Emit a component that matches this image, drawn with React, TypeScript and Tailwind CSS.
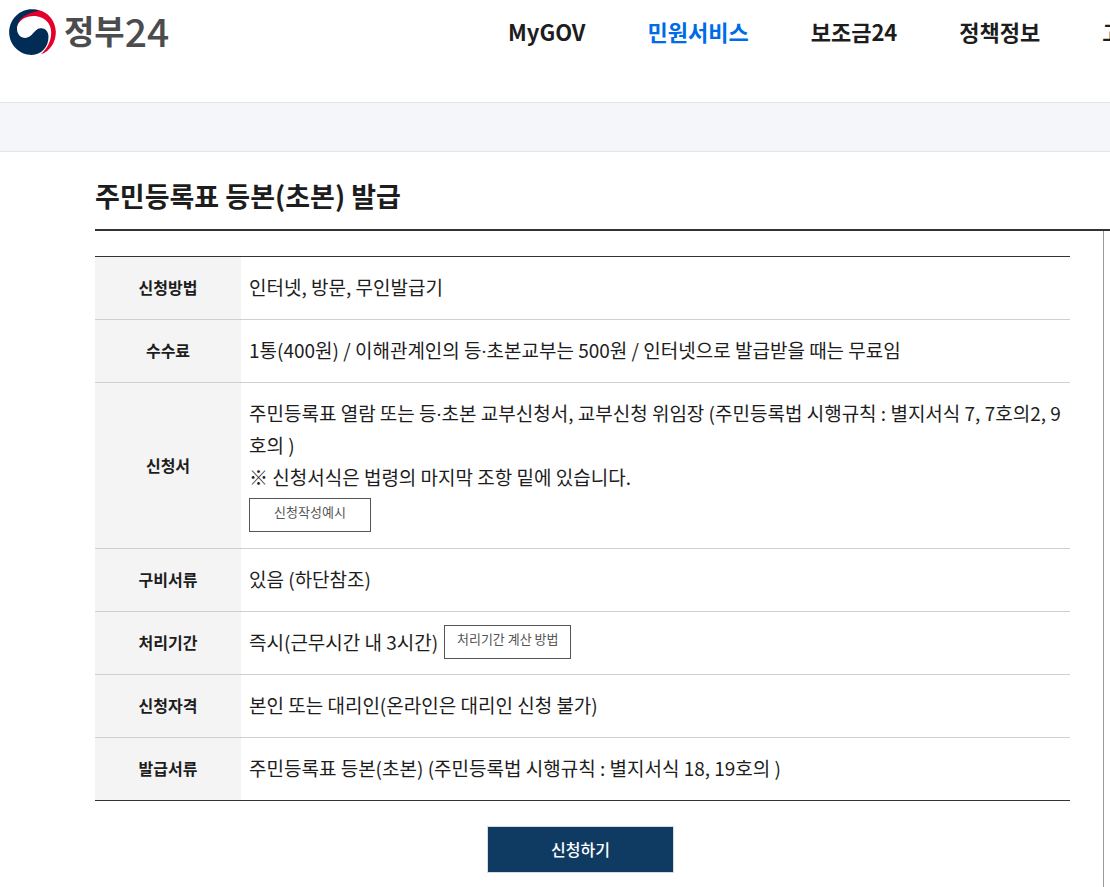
import type { ReactNode } from "react";

const navItems = [
  { label: "MyGOV", active: false },
  { label: "민원서비스", active: true },
  { label: "보조금24", active: false },
  { label: "정책정보", active: false },
  { label: "고객센터", active: false },
];

function GovSymbol() {
  return (
    <svg viewBox="27 28 140 138" className="h-[46px] w-[47px] shrink-0" aria-hidden="true">
      <path
        fill="#e4002b"
        d="M50 80 C60 57 82 47 106 49 C134 52 153 72 153 98 C153 124 142 146 122 164 C150 154 167 128 167 96 C166 60 138 30 104 30 C76 30 52 48 50 80Z"
      />
      <path
        fill="#002c55"
        d="M118 33 C74 16 27 50 27 98 C27 136 58 166 95 166 C122 164 145 144 145 111 C145 94 133 84 120 86 C102 88 98 113 76 115 C58 115 48 98 51 80 C56 54 82 38 118 33Z"
      />
    </svg>
  );
}

function MiddleDot() {
  return <span className="font-['Open_Sans',sans-serif] leading-none">·</span>;
}

function SmallButton({ children, className }: { children: ReactNode; className: string }) {
  return (
    <button
      type="button"
      className={`h-[34px] border border-[#555] bg-white pb-[6px] text-[13px] leading-5 text-[#555] ${className}`}
    >
      {children}
    </button>
  );
}

const rows: { title: string; body: ReactNode }[] = [
  { title: "신청방법", body: "인터넷, 방문, 무인발급기" },
  {
    title: "수수료",
    body: (
      <>
        1통(400원) / 이해관계인의 등
        <MiddleDot />
        초본교부는 500원 / 인터넷으로 발급받을 때는 무료임
      </>
    ),
  },
  {
    title: "신청서",
    body: (
      <>
        <p>
          주민등록표 열람 또는 등
          <MiddleDot />
          초본 교부신청서, 교부신청 위임장 (주민등록법 시행규칙 : 별지서식 7, 7호의2, 9호의 )
        </p>
        <p>※ 신청서식은 법령의 마지막 조항 밑에 있습니다.</p>
        <SmallButton className="mt-[5px] block w-[122px]">신청작성예시</SmallButton>
      </>
    ),
  },
  { title: "구비서류", body: "있음 (하단참조)" },
  {
    title: "처리기간",
    body: (
      <div className="-my-px flex items-center gap-[6px]">
        <span>즉시(근무시간 내 3시간)</span>
        <SmallButton className="w-[127px]">처리기간 계산 방법</SmallButton>
      </div>
    ),
  },
  { title: "신청자격", body: "본인 또는 대리인(온라인은 대리인 신청 불가)" },
  { title: "발급서류", body: "주민등록표 등본(초본) (주민등록법 시행규칙 : 별지서식 18, 19호의 )" },
];

export default function App() {
  return (
    <div className="flex min-h-screen flex-col overflow-hidden bg-white font-['Noto_Sans_CJK_KR',sans-serif] text-[#1d1d1d]">
      <header className="flex h-[102px] items-start whitespace-nowrap pl-[9px]">
        <a href="#" className="flex h-16 w-[499px] shrink-0 items-center gap-2 text-[#4b4c4e]">
          <GovSymbol />
          <span className="flex items-center pb-1 leading-none">
            <span className="text-[33px] font-bold">정부</span>
            <span className="text-[39px] font-medium">24</span>
          </span>
        </a>
        <nav className="flex h-[62px] shrink-0 items-center gap-[62px] text-[22px] font-bold">
          {navItems.map((item) => (
            <a key={item.label} href="#" className={item.active ? "text-[#006be6]" : ""}>
              {item.label}
            </a>
          ))}
        </nav>
      </header>
      <div className="h-[50px] border-y border-[#e3e5e9] bg-[#f5f6fa]" />
      <main className="flex flex-1 flex-col pl-[95px]">
        <h1 className="border-b-2 border-[#333] pb-[13px] pt-6 text-[27px] font-bold leading-10">
          주민등록표 등본(초본) 발급
        </h1>
        <div className="mr-[6px] flex-1 border-r border-[#999] pr-[33px] pt-[25px]">
          <table className="w-full table-fixed border-collapse border-y border-[#333] text-[19px] leading-8">
            <colgroup>
              <col className="w-[146px]" />
              <col />
            </colgroup>
            <tbody>
              {rows.map((row) => (
                <tr key={row.title} className="border-t border-[#d0d0d0] first:border-[#333]">
                  <th scope="row" className="bg-[#f4f4f4] pb-[2px] text-center text-[16px] font-bold">
                    {row.title}
                  </th>
                  <td className="break-all pb-4 pl-2 pt-[14px]">{row.body}</td>
                </tr>
              ))}
            </tbody>
          </table>
          <div className="flex justify-center py-[25px] pr-1">
            <button
              type="button"
              className="h-[47px] w-[187px] border border-[#d5dbe2] bg-[#0f3b63] pb-[2px] text-[16px] font-medium text-white"
            >
              신청하기
            </button>
          </div>
        </div>
      </main>
    </div>
  );
}
